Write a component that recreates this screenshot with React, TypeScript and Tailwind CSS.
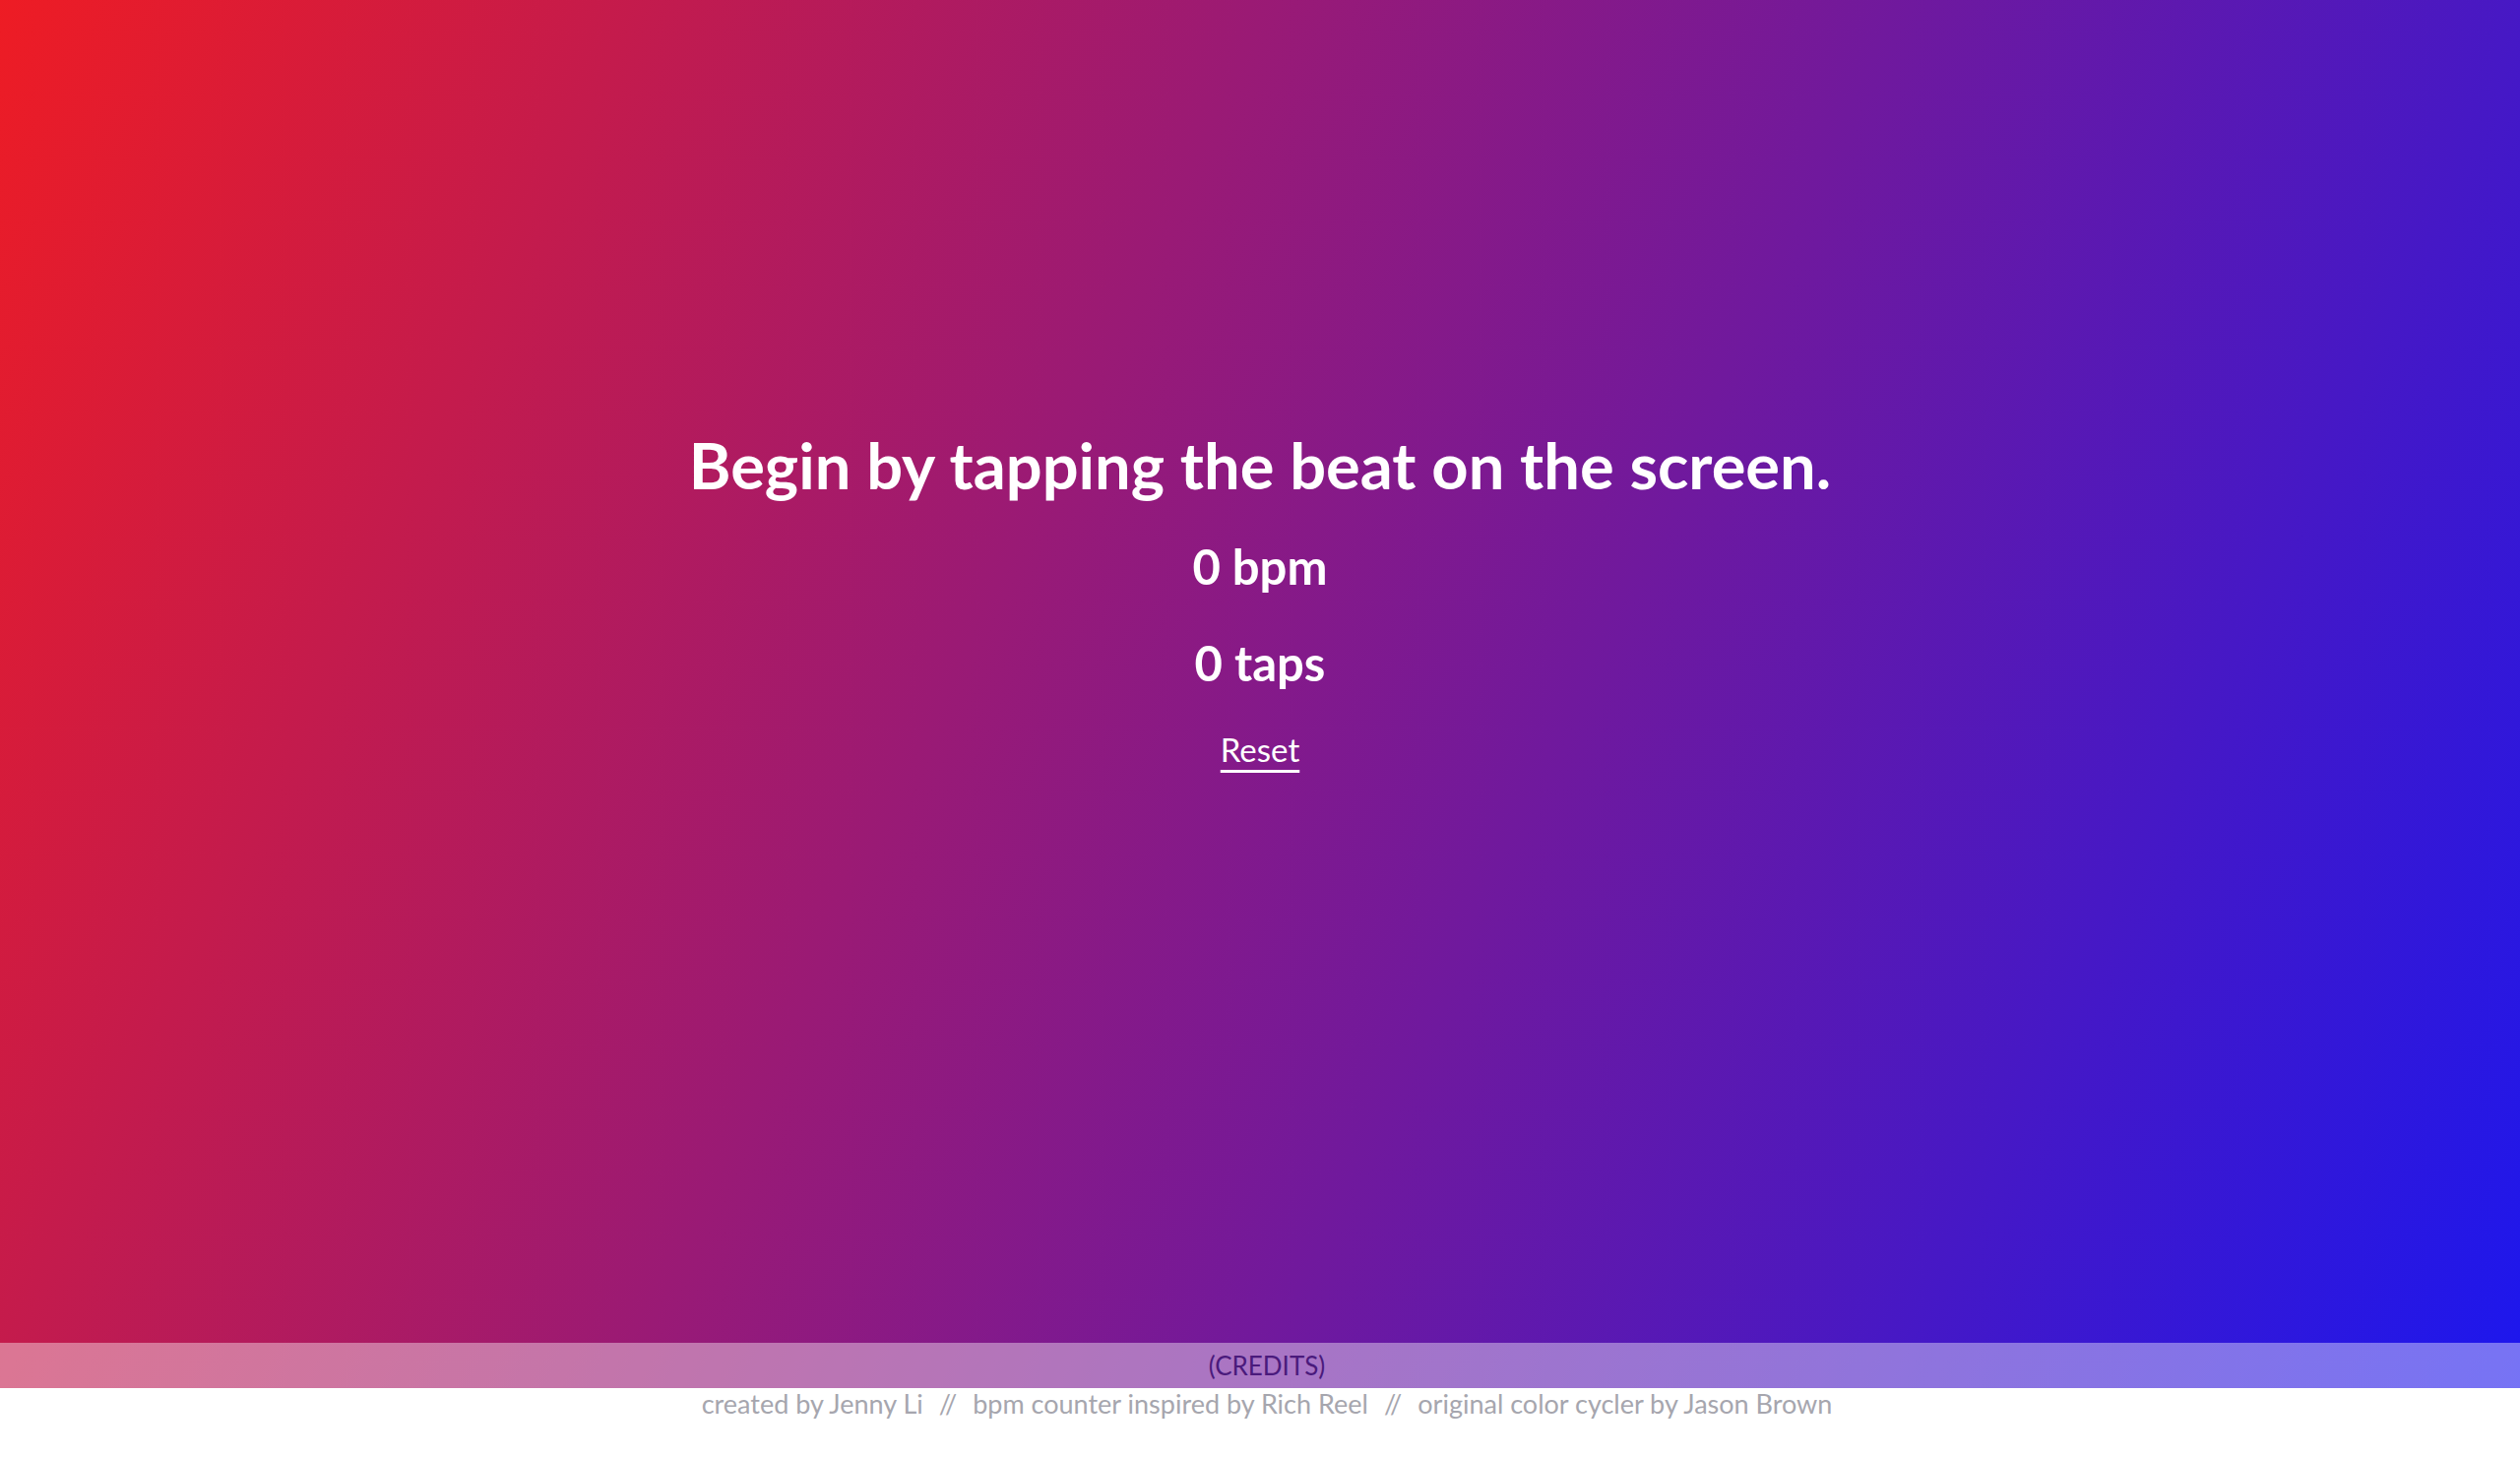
const credits = [
  'created by Jenny Li',
  'bpm counter inspired by Rich Reel',
  'original color cycler by Jason Brown',
]

export default function App() {
  return (
    <div className="min-h-screen bg-white font-['Lato','Noto_Sans',sans-serif]">
      <div className="flex h-[1410px] flex-col bg-[linear-gradient(115deg,#ee1c24_0%,#1c17ee_100%)]">
        <main className="flex flex-1 flex-col items-center pt-[432px] text-white">
          <h1 className="text-[65px] leading-[80px] font-bold">
            Begin by tapping the beat on the screen.
          </h1>
          <p className="mt-[33px] text-[49px] leading-[60px] font-bold">0 bpm</p>
          <p className="mt-[38px] text-[49px] leading-[60px] font-bold">0 taps</p>
          <button className="mt-[38px] text-[33px] leading-[40px] text-white underline decoration-[3px] underline-offset-[8px]">
            Reset
          </button>
        </main>
        <div className="flex h-[46px] items-center justify-center bg-white/40 pl-[14px] text-[26px] text-[#4a1a7c]">
          (CREDITS)
        </div>
      </div>
      <footer className="flex justify-center pl-[14px] pt-[1px] text-[27px] leading-[30px] text-[#a6a6ae]">
        {credits.map((c, i) => (
          <span key={c} className="flex">
            {i > 0 && <span className="px-[16px]">//</span>}
            {c}
          </span>
        ))}
      </footer>
    </div>
  )
}
